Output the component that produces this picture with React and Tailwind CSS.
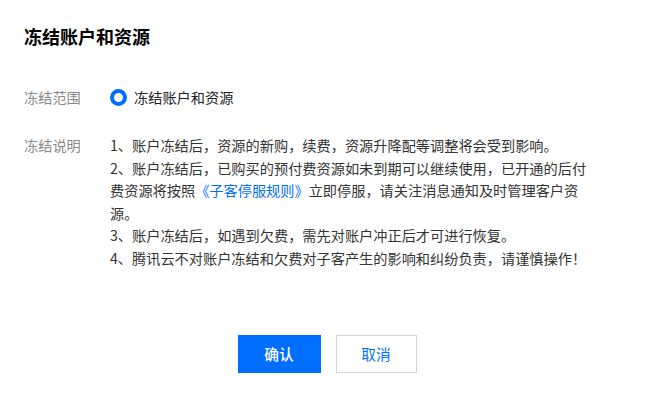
export default function App() {
  return (
    <div
      className="w-[669px] h-[417px] bg-white px-[24px] pt-[24px] text-[#333]"
      style={{ fontFamily: '"Noto Sans CJK SC", "Noto Sans", sans-serif' }}
    >
      <h3 className="text-[18px] leading-[25px] font-bold text-black">冻结账户和资源</h3>

      <div className="mt-[37px] flex text-[14.2px] leading-[22.6px]">
        <div className="w-[86px] shrink-0 text-[#888]">冻结范围</div>
        <label className="flex items-center">
          <span className="w-[17px] h-[17px] rounded-full border-[4.5px] border-[#006eff] bg-white" />
          <span className="ml-[7px] text-[#222]">冻结账户和资源</span>
        </label>
      </div>

      <div className="mt-[25.5px] flex text-[14.2px] leading-[22.6px]">
        <div className="w-[86px] shrink-0 text-[#888]">冻结说明</div>
        <div className="whitespace-nowrap">
          <p>1、账户冻结后，资源的新购，续费，资源升降配等调整将会受到影响。</p>
          <p>
            2、账户冻结后，已购买的预付费资源如未到期可以继续使用，已开通的后付
            <br />
            费资源将按照<a className="text-[#006eff]">《子客停服规则》</a>立即停服，请关注消息通知及时管理客户资
            <br />
            源。
          </p>
          <p>3、账户冻结后，如遇到欠费，需先对账户冲正后才可进行恢复。</p>
          <p>4、腾讯云不对账户冻结和欠费对子客产生的影响和纠纷负责，请谨慎操作！</p>
        </div>
      </div>

      <div className="mt-[65px] pr-[15px] flex justify-center gap-[15px] text-[14.7px]">
        <button className="w-[83px] h-[38px] bg-[#006eff] text-white font-medium">确认</button>
        <button className="w-[81px] h-[38px] border border-[#cfd5de] bg-white text-[#006eff]">取消</button>
      </div>
    </div>
  );
}
